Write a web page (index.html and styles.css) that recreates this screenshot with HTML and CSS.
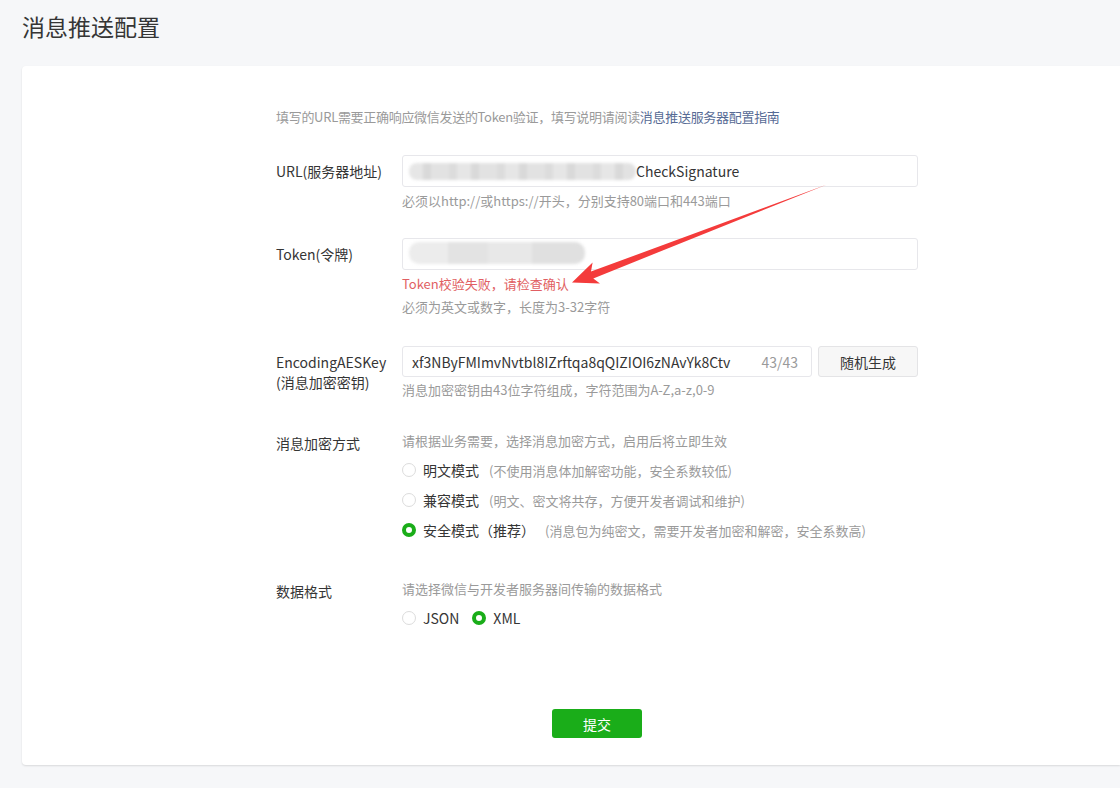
FILE: index.html
```html
<!DOCTYPE html>
<html lang="zh-CN">
<head>
<meta charset="utf-8">
<title>消息推送配置</title>
<link rel="stylesheet" href="styles.css">
</head>
<body>
<h1 class="page-title">消息推送配置</h1>
<div class="card">
  <form class="form">
    <p class="intro">填写的URL需要正确响应微信发送的Token验证，填写说明请阅读<a class="link" href="#">消息推送服务器配置指南</a></p>

    <div class="field field-url">
      <label class="label">URL(服务器地址)</label>
      <div class="control">
        <div class="input"><span class="blur blur-url"></span><span class="input-text">CheckSignature</span></div>
        <p class="hint">必须以http://或https://开头，分别支持80端口和443端口</p>
      </div>
    </div>

    <div class="field field-token">
      <label class="label">Token(令牌)</label>
      <div class="control">
        <div class="input"><span class="blur blur-token"></span></div>
        <p class="error">Token校验失败，请检查确认</p>
        <p class="hint hint-after-error">必须为英文或数字，长度为3-32字符</p>
      </div>
    </div>

    <div class="field field-aes">
      <label class="label">EncodingAESKey<br>(消息加密密钥)</label>
      <div class="control">
        <div class="aes-row">
          <div class="input input-aes"><span class="input-text">xf3NByFMImvNvtbl8IZrftqa8qQIZIOI6zNAvYk8Ctv</span><span class="counter">43/43</span></div>
          <button type="button" class="btn-default">随机生成</button>
        </div>
        <p class="hint hint-aes">消息加密密钥由43位字符组成，字符范围为A-Z,a-z,0-9</p>
      </div>
    </div>

    <div class="field field-mode">
      <label class="label label-top">消息加密方式</label>
      <div class="control">
        <p class="desc">请根据业务需要，选择消息加密方式，启用后将立即生效</p>
        <div class="radio-list">
          <div class="radio-item"><span class="radio"></span><span class="radio-label">明文模式</span><span class="radio-desc">(不使用消息体加解密功能，安全系数较低)</span></div>
          <div class="radio-item"><span class="radio"></span><span class="radio-label">兼容模式</span><span class="radio-desc">(明文、密文将共存，方便开发者调试和维护)</span></div>
          <div class="radio-item"><span class="radio radio-checked"></span><span class="radio-label">安全模式（推荐）</span><span class="radio-desc">(消息包为纯密文，需要开发者加密和解密，安全系数高)</span></div>
        </div>
      </div>
    </div>

    <div class="field field-format">
      <label class="label label-top">数据格式</label>
      <div class="control">
        <p class="desc">请选择微信与开发者服务器间传输的数据格式</p>
        <div class="radio-inline">
          <div class="radio-item"><span class="radio"></span><span class="radio-label">JSON</span></div>
          <div class="radio-item"><span class="radio radio-checked"></span><span class="radio-label">XML</span></div>
        </div>
      </div>
    </div>

    <div class="actions">
      <button type="button" class="btn-primary">提交</button>
    </div>
  </form>
</div>

<svg class="annotation-arrow" width="1120" height="788" viewBox="0 0 1120 788" aria-hidden="true">
  <polygon points="827,184.4 593.3,278.4 600.0,283.5 572,282.5 592.6,262.6 591.0,271.6" fill="#f43b3b"/>
</svg>
</body>
</html>
```

FILE: styles.css
```css
html, body {
  margin: 0;
  padding: 0;
  overflow: hidden;
}

body {
  background: #f6f7f9;
  font-family: "Noto Sans CJK SC", "Microsoft YaHei", "Liberation Sans", sans-serif;
  color: #353535;
  width: 1120px;
  height: 788px;
  position: relative;
}

p {
  margin: 0;
}

.page-title {
  margin: 0;
  padding: 12px 22px 0;
  font-size: 23px;
  line-height: 28px;
  font-weight: normal;
  color: #353535;
}

.card {
  margin: 26px 0 0 22px;
  background: #fff;
  border-radius: 4px 0 0 4px;
  box-shadow: 0 1px 2px rgba(0, 0, 0, 0.12);
  padding: 41px 0 27px 254px;
}

.form {
  width: 642px;
}

.intro {
  font-size: 13px;
  line-height: 20px;
  color: #9a9a9a;
  letter-spacing: -0.3px;
}

.link {
  color: #576b95;
  text-decoration: none;
}

.field {
  display: flex;
}

.label {
  width: 126px;
  flex: none;
  font-size: 14px;
  line-height: 20px;
  padding-top: 6px;
  color: #353535;
}

.label-top {
  padding-top: 2px;
}

.control {
  width: 516px;
}

.field-url {
  margin-top: 28px;
}

.field-token {
  margin-top: 27px;
}

.field-aes {
  margin-top: 29px;
}

.field-mode {
  margin-top: 31px;
}

.field-format {
  margin-top: 39px;
}

.input {
  box-sizing: border-box;
  height: 32px;
  border: 1px solid #e7e7eb;
  border-radius: 3px;
  background: #fff;
  display: flex;
  align-items: center;
  padding: 0 10px 0 6px;
  font-size: 14px;
  color: #353535;
}

.input-text {
  white-space: nowrap;
}

.blur {
  display: block;
  height: 17px;
  border-radius: 8px;
  filter: blur(1.5px);
}

.blur-url {
  width: 227px;
  background: repeating-linear-gradient(90deg, #e6e6e6 0 14px, #d9d9d9 14px 22px, #e2e2e2 22px 40px, #dcdcdc 40px 48px);
}

.blur-token {
  width: 176px;
  height: 22px;
  margin-top: -3px;
  border-radius: 10px;
  background: linear-gradient(90deg, #ececec 0 22%, #e3e3e3 22% 45%, #e8e8e8 45% 70%, #e0e0e0 70% 100%);
}

.hint {
  font-size: 13px;
  line-height: 20px;
  color: #9a9a9a;
  margin-top: 4px;
}

.hint-after-error {
  margin-top: 3px;
}

.hint-aes {
  margin-top: 3px;
}

.error {
  font-size: 13px;
  line-height: 20px;
  color: #e15f63;
  margin-top: 4px;
}

.aes-row {
  display: flex;
  gap: 6px;
}

.input-aes {
  width: 410px;
  height: 31px;
  padding: 0 13px 0 9px;
  justify-content: space-between;
}

.counter {
  color: #9a9a9a;
}

.btn-default {
  box-sizing: border-box;
  width: 100px;
  height: 31px;
  border: 1px solid #e4e4e6;
  border-radius: 3px;
  background: #f7f7f7;
  font-family: inherit;
  font-size: 14px;
  color: #353535;
  padding: 0;
}

.desc {
  font-size: 13px;
  line-height: 20px;
  color: #9a9a9a;
}

.radio-list {
  margin-top: 9px;
  display: flex;
  flex-direction: column;
  gap: 10px;
}

.radio-inline {
  margin-top: 9px;
  display: flex;
  gap: 13px;
}

.radio-item {
  display: flex;
  align-items: center;
  height: 20px;
  white-space: nowrap;
}

.radio {
  box-sizing: border-box;
  width: 14px;
  height: 14px;
  border: 1px solid #dcdcdc;
  border-radius: 50%;
  background: #fff;
  margin-right: 7px;
  flex: none;
}

.radio-checked {
  border: 4px solid #1aad19;
}

.radio-label {
  font-size: 14px;
  color: #353535;
}

.radio-desc {
  font-size: 13px;
  color: #9a9a9a;
  margin-left: 10px;
}

.actions {
  margin-top: 81px;
  display: flex;
  justify-content: center;
}

.btn-primary {
  width: 90px;
  height: 29px;
  border: none;
  border-radius: 3px;
  background: #1aad19;
  color: #fff;
  font-family: inherit;
  font-size: 14px;
  padding: 0;
}

.annotation-arrow {
  position: absolute;
  left: 0;
  top: 0;
  pointer-events: none;
}
```
